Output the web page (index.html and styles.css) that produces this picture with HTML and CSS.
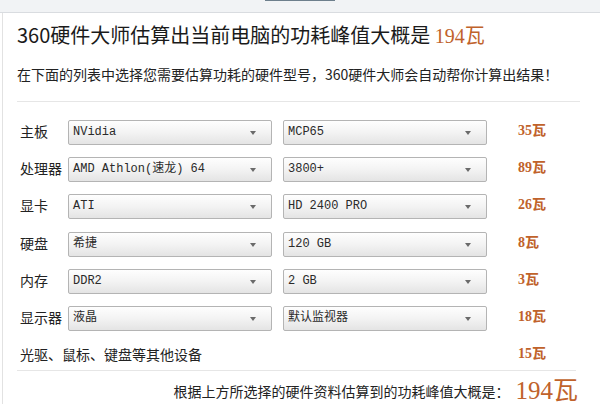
FILE: index.html
```html
<!DOCTYPE html>
<html lang="zh-CN">
<head>
  <meta charset="UTF-8">
  <title>功耗估算</title>
  <link rel="stylesheet" href="styles.css">
</head>
<body>

  <div class="topbar"><span class="tab"></span></div>

  <div class="panel">
    <h1 class="title">360硬件大师估算出当前电脑的功耗峰值大概是 <span class="watt">194瓦</span></h1>
    <p class="hint">在下面的列表中选择您需要估算功耗的硬件型号，360硬件大师会自动帮你计算出结果！</p>

    <div class="parts">
      <span class="label">主板</span>
      <div class="pick">NVidia</div>
      <div class="pick">MCP65</div>
      <span class="cost">35瓦</span>

      <span class="label">处理器</span>
      <div class="pick">AMD Athlon(速龙) 64</div>
      <div class="pick">3800+</div>
      <span class="cost">89瓦</span>

      <span class="label">显卡</span>
      <div class="pick">ATI</div>
      <div class="pick">HD 2400 PRO</div>
      <span class="cost">26瓦</span>

      <span class="label">硬盘</span>
      <div class="pick">希捷</div>
      <div class="pick">120 GB</div>
      <span class="cost">8瓦</span>

      <span class="label">内存</span>
      <div class="pick">DDR2</div>
      <div class="pick">2 GB</div>
      <span class="cost">3瓦</span>

      <span class="label">显示器</span>
      <div class="pick">液晶</div>
      <div class="pick">默认监视器</div>
      <span class="cost">18瓦</span>

      <span class="label wide">光驱、鼠标、键盘等其他设备</span>
      <span class="cost">15瓦</span>
    </div>

    <div class="total">
      根据上方所选择的硬件资料估算到的功耗峰值大概是：<span class="total-num">194瓦</span>
    </div>
  </div>

</body>
</html>
```

FILE: styles.css
```css
body {
  margin: 0;
  background: #fff;
  font-family: "Noto Sans CJK SC", "Liberation Sans", sans-serif;
  color: #222;
}

.topbar {
  height: 12px;
  background: #f1f3f5;
  border-bottom: 1px solid #d9dce0;
  position: relative;
}

.topbar .tab {
  position: absolute;
  left: 265px;
  top: 0;
  width: 70px;
  height: 1px;
  background: #6d7f8c;
}

.panel {
  margin-left: 2px;
  border-left: 1px solid #e2e2e2;
  padding: 0 20px 0 14px;
  height: 391px;
  overflow: hidden;
}

.title {
  margin: 0;
  padding-top: 8px;
  font-size: 20px;
  font-weight: normal;
  line-height: 28px;
  color: #1a1a1a;
}

.title .watt {
  color: #c0622b;
  font-family: "Liberation Serif", "Noto Sans CJK SC", serif;
}

.hint {
  margin: 14px 0 0;
  font-size: 14px;
  line-height: 20px;
  padding-bottom: 17px;
  border-bottom: 1px solid #e6e6e6;
}

.parts {
  display: grid;
  grid-template-columns: 37px 204px 204px auto;
  column-gap: 11px;
  row-gap: 12.2px;
  margin-top: 18px;
  padding-left: 3px;
  padding-bottom: 2px;
  margin-right: 4px;
  border-bottom: 1px solid #e6e6e6;
}

.label {
  font-size: 14px;
  line-height: 22px;
  height: 22px;
  padding-bottom: 3px;
  white-space: nowrap;
}

.label.wide {
  grid-column: 1 / 4;
}

.pick {
  position: relative;
  height: 23px;
  line-height: 23px;
  border: 1px solid #b4b4b4;
  border-radius: 2px;
  background: linear-gradient(#fefefe, #f3f3f3 50%, #e4e4e4);
  padding-left: 4px;
  font-family: "Liberation Mono", "Noto Sans CJK SC", monospace;
  font-size: 12px;
  color: #2a2a2a;
}

.pick::after {
  content: "";
  position: absolute;
  right: 15px;
  top: 10px;
  border-left: 3px solid transparent;
  border-right: 3px solid transparent;
  border-top: 4px solid #6a6a6a;
}

.cost {
  margin-left: 20px;
  font-size: 14px;
  line-height: 22px;
  padding-bottom: 3px;
  font-weight: bold;
  color: #c0622b;
  font-family: "Liberation Serif", "Noto Sans CJK SC", serif;
}

.total {
  text-align: right;
  padding-right: 2px;
  margin-top: 5px;
  font-size: 14px;
  line-height: 30px;
}

.total-num {
  margin-left: 6px;
  font-size: 25px;
  color: #c0622b;
  font-family: "Liberation Serif", "Noto Sans CJK SC", serif;
  vertical-align: -2px;
}
```
